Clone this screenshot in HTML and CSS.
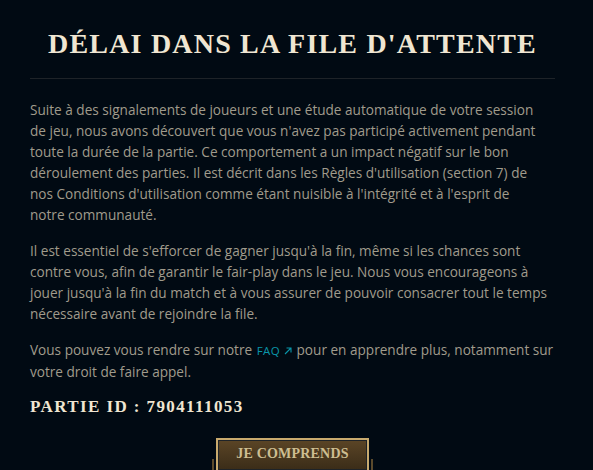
FILE: index.html
```html
<!DOCTYPE html>
<html>
    <head>
        <meta charset="utf-8">
        <link rel="stylesheet" href="styles.css">
    </head>
    <body>
        <div class='modal'>
            <h1 class='modal-title'>Délai dans la file d'attente</h1>
            <div class='modal-body'>
                <p>Suite à des signalements de joueurs et une étude automatique de votre session de&nbsp;jeu, nous avons découvert que vous n'avez pas participé activement pendant toute&nbsp;la durée de la partie. Ce comportement a un impact négatif sur le bon déroulement des parties. Il est décrit dans les Règles d'utilisation (section 7) de nos&nbsp;Conditions d'utilisation comme étant nuisible à l'intégrité et à l'esprit de notre&nbsp;communauté.</p>
                <p>Il est essentiel de s'efforcer de gagner jusqu'à la fin, même si les chances sont contre vous, afin de garantir le fair-play dans le jeu. Nous vous encourageons à jouer jusqu'à la fin du match et à vous assurer de pouvoir consacrer tout le temps nécessaire avant de rejoindre la file.</p>
                <p>Vous pouvez vous rendre sur notre <a class='faq' href='#'>FAQ<svg class='ext' width='8' height='8' viewBox='0 0 8 8'><path d='M1 7 L7 1 M2.5 1 H7 V5.5' fill='none' stroke='currentColor' stroke-width='1.1'/></svg></a> pour en apprendre plus, notamment sur votre droit de faire appel.</p>
            </div>
            <div class='game-id'>Partie ID : 7904111053</div>
            <div class='footer'>
                <a class='butt' href='#'>Je comprends</a>
            </div>
        </div>
    </body>
</html>
```

FILE: styles.css
```css
html {
    box-sizing: border-box;
}
*, *:before, *:after {
    box-sizing: inherit;
}

body {
    margin: 0;
    background-color: #010a13;
    font-family: "Open Sans", "Liberation Sans", sans-serif;
    overflow: hidden;
}

.modal {
    width: 525px;
    margin-left: 30px;
}

.modal-title {
    margin: 0;
    padding: 27px 0 17px;
    border-bottom: 1px solid #1e2328;
    text-align: center;
    text-transform: uppercase;
    font-family: "Liberation Serif", serif;
    font-weight: bold;
    font-size: 28px;
    line-height: 34px;
    letter-spacing: 1.2px;
    color: #f0e6d2;
}

.modal-body {
    padding-top: 20px;
    font-size: 13.6px;
    line-height: 21px;
    color: #a09b8c;
}

.modal-body p {
    margin: 0 0 15px;
}

.faq {
    display: inline-block;
    margin: 0 1px;
    color: #0a96aa;
    text-decoration: none;
    font-size: 11.5px;
    letter-spacing: 0.4px;
}

.ext {
    margin-left: 4px;
    vertical-align: 0;
}

.game-id {
    margin-top: 10px;
    text-transform: uppercase;
    font-family: "Liberation Serif", serif;
    font-weight: bold;
    font-size: 17px;
    line-height: 20px;
    letter-spacing: 1.4px;
    color: #f0e6d2;
}

.footer {
    margin-top: 21px;
    text-align: center;
}

.butt {
    position: relative;
    display: inline-block;
    width: 153px;
    height: 34px;
    border: 2px solid #c8aa6e;
    box-shadow: inset 0 0 0 1px #1e2328;
    background: linear-gradient(#5b4526, #3a2c18);
    padding-top: 6px;
    text-decoration: none;
    text-transform: uppercase;
    font-family: "Liberation Serif", serif;
    font-weight: bold;
    font-size: 14px;
    line-height: 16px;
    letter-spacing: 0.2px;
    color: #cdbe91;
}

/* little side rails of the frame */
.butt:before, .butt:after {
    content: '';
    position: absolute;
    top: 19px;
    width: 2px;
    height: 20px;
    background: #5b4a2c;
}
.butt:before {
    left: -6px;
}
.butt:after {
    right: -6px;
}
```
